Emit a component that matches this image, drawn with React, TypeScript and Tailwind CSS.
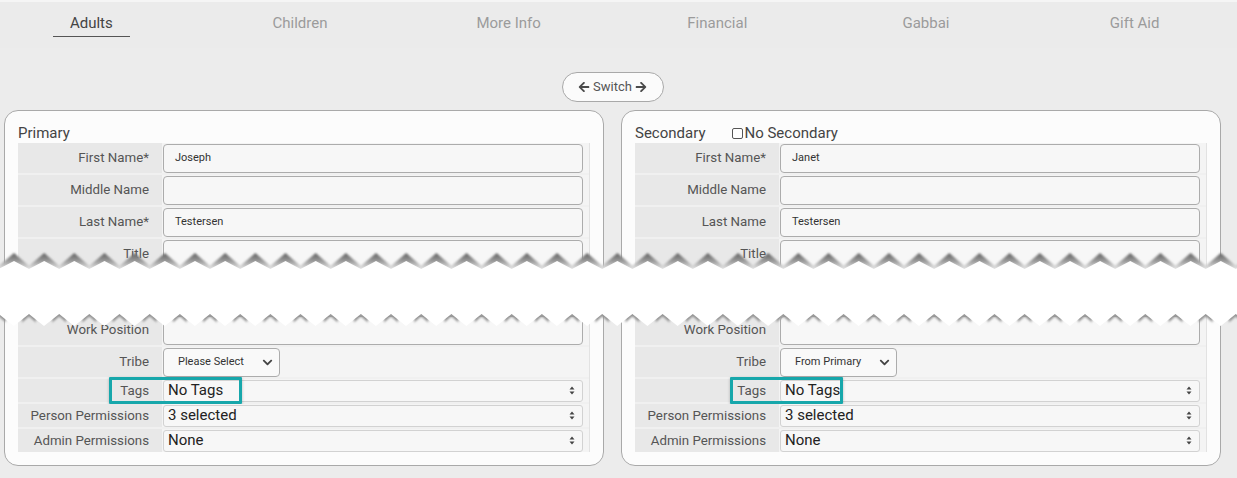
import { FaArrowLeft, FaArrowRight, FaChevronDown } from "react-icons/fa"

const TABS = ["Adults", "Children", "More Info", "Financial", "Gabbai", "Gift Aid"]

// torn-paper band geometry (page coords minus Y0)
const P = 1237 / 41
const KS = Array.from({ length: 45 }, (_, i) => i - 2)

const pts = (list: number[][]) => list.map(([x, y]) => `${x.toFixed(1)},${y.toFixed(1)}`).join(" ")

const shadowTop = pts([
  ...KS.flatMap((k) => [
    [14 + P * k, 11],
    [29 + P * k, 24],
  ]),
  [1300, 40],
  [-80, 40],
])

const whiteBand = pts([
  ...KS.flatMap((k) => [
    [14 + P * k, 19],
    [29 + P * k, 27],
  ]),
  ...[...KS].reverse().flatMap((k) => [
    [44 + P * k, 84],
    [29 + P * k, 72],
  ]),
])

function TornBand() {
  return (
    <svg
      className="pointer-events-none absolute left-0 top-[240px]"
      width="1237"
      height="95"
      viewBox="0 0 1237 95"
    >
      <defs>
        <linearGradient id="sh" x1="0" y1="11" x2="0" y2="27" gradientUnits="userSpaceOnUse">
          <stop offset="0" stopColor="#5e5e5e" />
          <stop offset="0.5" stopColor="#9a9a9a" />
          <stop offset="1" stopColor="#e8e8e8" />
        </linearGradient>
        <filter id="bl" x="-5%" y="-50%" width="110%" height="200%">
          <feGaussianBlur stdDeviation="0.8" />
        </filter>
      </defs>
      <polygon points={shadowTop} fill="url(#sh)" filter="url(#bl)" />
      <g filter="url(#bl)">
        {KS.map((k) => {
          const x = 29 + P * k
          return (
            <polygon
              key={k}
              points={pts([
                [x - 7, 80.5],
                [x, 74.6],
                [x + 7, 80.5],
                [x + 7, 70],
                [x - 7, 70],
              ])}
              fill="#939393"
            />
          )
        })}
      </g>
      <polygon points={whiteBand} fill="#ffffff" />
    </svg>
  )
}

function UpDown() {
  return (
    <svg width="6" height="9" viewBox="0 0 6 9" className="shrink-0">
      <path d="M3 0.5 L5.5 3.5 H0.5 Z M3 8.5 L5.5 5.5 H0.5 Z" fill="#444" />
    </svg>
  )
}

function Label({ text, short }: { text: string; short?: boolean }) {
  return (
    <div
      className={`flex w-[144px] shrink-0 items-center justify-end bg-[#e8e8e8] pr-[13px] text-[13.3px] text-[#555] ${
        short ? "h-[23px]" : "h-[30px]"
      }`}
    >
      {text}
    </div>
  )
}

function InputRow({ label, value }: { label: string; value?: string }) {
  return (
    <div className="flex h-[30px]">
      <Label text={label} />
      <div className="flex flex-1 items-center bg-[#f4f4f4] pl-[1px] pr-[6px]">
        <div className="flex h-[29px] w-full items-center rounded-[4px] border border-[#acacac] bg-[#f7f7f7] px-[11px] text-[11px] text-[#333]">
          {value}
        </div>
      </div>
    </div>
  )
}

function SelectRow({ label, value }: { label: string; value: string }) {
  return (
    <div className="flex h-[30px]">
      <Label text={label} />
      <div className="flex flex-1 items-center bg-[#f4f4f4] pl-[1px]">
        <div className="flex h-[29px] w-[117px] items-center justify-between rounded-[4px] border border-[#acacac] bg-[#f9f9f9] pl-[14px] pr-[6px] text-[11px] text-[#333]">
          {value}
          <FaChevronDown className="text-[11px] text-[#444]" />
        </div>
      </div>
    </div>
  )
}

function MultiRow({
  label,
  value,
  box,
}: {
  label: string
  value: string
  box?: { left: string; width: string }
}) {
  return (
    <div className="relative flex h-[23px]">
      <Label text={label} short />
      <div className="flex flex-1 items-center bg-[#f4f4f4] pl-[1px] pr-[6px]">
        <div className="flex h-[22px] w-full items-center justify-between rounded-[3px] border border-[#d2d2d2] bg-[#f7f7f7] pl-[4px] pr-[7px] text-[15px] text-[#222]">
          {value}
          <UpDown />
        </div>
      </div>
      {box && (
        <div
          className={`absolute top-[-2px] h-[27px] rounded-[1px] border-[3px] border-[#17a7ab] shadow-[0_1px_3px_rgba(0,0,0,0.25)] ${box.left} ${box.width}`}
        />
      )}
    </div>
  )
}

function Panel({
  title,
  first,
  last,
  tribe,
  box,
}: {
  title: React.ReactNode
  first: string
  last: string
  tribe: string
  box: { left: string; width: string }
}) {
  return (
    <div className="w-[600px] rounded-[14px] border border-[#a9a9a9] bg-[#fcfcfc] px-[13px] pb-[13px] pt-[13px]">
      <div className="mb-[1px] flex h-[18px] items-center text-[15px] leading-[18px] text-[#444]">{title}</div>
      <div className="flex flex-col gap-[2px] border-r border-[#e2e2e2] bg-[#f0f0f0]">
        <InputRow label="First Name*" value={first} />
        <InputRow label="Middle Name" />
        <InputRow label={last} value="Testersen" />
        <InputRow label="Title" />
        <div className="flex h-[42px]">
          <div className="w-[144px] bg-[#e8e8e8]" />
          <div className="flex-1 bg-[#f4f4f4]" />
        </div>
        <InputRow label="Work Position" />
        <SelectRow label="Tribe" value={tribe} />
        <MultiRow label="Tags" value="No Tags" box={box} />
        <MultiRow label="Person Permissions" value="3 selected" />
        <MultiRow label="Admin Permissions" value="None" />
      </div>
    </div>
  )
}

export default function App() {
  return (
    <div className="relative h-[478px] w-[1237px] overflow-hidden border-t-2 border-[#f5f5f5] bg-[#ececec] font-['Roboto','Liberation_Sans',sans-serif]">
      {/* tabs */}
      <div className="h-[46px] bg-[#ebebeb] pt-[11px]">
        <div className="-ml-[13px] grid w-[1252px] grid-cols-6">
          {TABS.map((t, i) => (
            <div key={t} className="flex justify-center">
              <span
                className={`px-[17px] pb-[3px] text-[15px] leading-[20px] ${
                  i === 0 ? "border-b border-[#555] text-[#444]" : "text-[#9b9b9b]"
                }`}
              >
                {t}
              </span>
            </div>
          ))}
        </div>
      </div>

      <div className="w-[1221px] pl-[4px]">
        <div className="flex justify-center pt-[24px]">
          <button className="flex h-[30px] w-[102px] items-center justify-center gap-[3px] rounded-full border border-[#a9a9a9] bg-[#fbfbfb] text-[13px] text-[#555]">
            <FaArrowLeft className="text-[12px] text-[#4a4a4a]" />
            Switch
            <FaArrowRight className="text-[12px] text-[#4a4a4a]" />
          </button>
        </div>

        <div className="mt-[8px] flex gap-[17px]">
          <Panel
            title="Primary"
            first="Joseph"
            last="Last Name*"
            tribe="Please Select"
            box={{ left: "left-[91px]", width: "w-[133px]" }}
          />
          <Panel
            title={
              <>
                <span>Secondary</span>
                <span className="ml-[27px] flex items-center">
                  <span className="mr-[1px] inline-block h-[11px] w-[11px] rounded-[2px] border border-[#555] bg-white" />
                  No Secondary
                </span>
              </>
            }
            first="Janet"
            last="Last Name"
            tribe="From Primary"
            box={{ left: "left-[95px]", width: "w-[113px]" }}
          />
        </div>
      </div>

      <TornBand />
    </div>
  )
}
